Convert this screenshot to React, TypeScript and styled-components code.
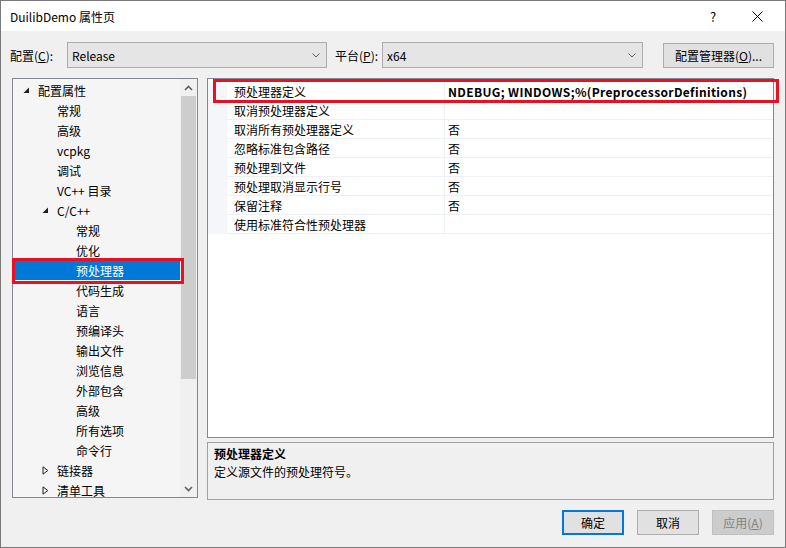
import React from 'react'
import styled, { createGlobalStyle } from 'styled-components'

const GlobalStyle = createGlobalStyle`
  html, body {
    margin: 0;
    padding: 0;
    background: #ffffff;
  }
  * {
    box-sizing: border-box;
  }
`

const FONT = `"Segoe UI", "Noto Sans CJK SC", sans-serif`

const Window = styled.div`
  position: relative;
  width: 786px;
  height: 548px;
  border: 1px solid #7a7a7a;
  background: #f0f0f0;
  font-family: ${FONT};
  font-size: 12px;
  color: #000;
  display: flex;
  flex-direction: column;
  overflow: hidden;
`

const TitleBar = styled.div`
  height: 30px;
  background: #ffffff;
  display: flex;
  align-items: center;
  padding-left: 9px;
  padding-right: 6px;
  flex-shrink: 0;

  .title {
    flex: 1;
    font-size: 12px;
  }
`

const TitleButton = styled.div`
  width: 44px;
  height: 30px;
  display: flex;
  align-items: center;
  justify-content: center;
  font-size: 13px;
`

const Body = styled.div`
  flex: 1;
  display: flex;
  flex-direction: column;
  padding: 11px 11px 0 11px;
`

const Toolbar = styled.div`
  height: 26px;
  display: flex;
  align-items: center;
  margin-left: -2px;
`

const Label = styled.span<{ $gap: number; $indent?: number }>`
  width: ${(p) => p.$gap}px;
  padding-left: ${(p) => p.$indent ?? 0}px;
  flex-shrink: 0;
  u {
    text-decoration: underline;
  }
`

const Combo = styled.div<{ $width: number }>`
  width: ${(p) => p.$width}px;
  height: 26px;
  border: 1px solid #adadad;
  background: #e5e5e5;
  display: flex;
  align-items: center;
  padding-left: 4px;
  padding-right: 6px;

  span {
    flex: 1;
  }
`

const PushButton = styled.div<{ $primary?: boolean; $disabled?: boolean }>`
  height: 25px;
  border: ${(p) => (p.$primary ? '2px' : '1px')} solid;
  background: ${(p) => (p.$disabled ? '#cccccc' : '#e1e1e1')};
  color: ${(p) => (p.$disabled ? '#838383' : '#000')};
  border-color: ${(p) => (p.$disabled ? '#bfbfbf' : p.$primary ? '#0078d7' : '#adadad')};
  display: flex;
  align-items: center;
  justify-content: center;
  width: 62px;
`

const ManagerButton = styled(PushButton)`
  width: 111px;
  margin-left: auto;
`

const Main = styled.div`
  display: flex;
  margin-top: 10px;
  height: 422px;
  gap: 9px;
`

const TreePanel = styled.div`
  width: 186px;
  height: 420px;
  border: 1px solid #828790;
  background: #f5f5f5;
  display: flex;
`

const TreeList = styled.div`
  flex: 1;
  padding-top: 1px;
  overflow: hidden;
`

const TreeRow = styled.div<{ $level: number; $selected?: boolean }>`
  height: 20px;
  display: flex;
  align-items: center;
  padding-left: ${(p) => 10 + p.$level * 19}px;
  background: ${(p) => (p.$selected ? '#0078d7' : 'transparent')};
  color: ${(p) => (p.$selected ? '#ffffff' : '#000')};
  white-space: nowrap;
`

const Toggle = styled.span`
  width: 15px;
  height: 20px;
  display: flex;
  align-items: center;
  flex-shrink: 0;
`

const ScrollBar = styled.div`
  width: 17px;
  background: #f0f0f0;
  display: flex;
  flex-direction: column;
  align-items: center;
`

const ScrollArrow = styled.div`
  height: 17px;
  width: 17px;
  display: flex;
  align-items: center;
  justify-content: center;
`

const ScrollTrack = styled.div`
  flex: 1;
  width: 100%;
  display: flex;
  flex-direction: column;
`

const ScrollThumb = styled.div`
  height: 283px;
  margin: 0 1px;
  background: #cdcdcd;
`

const RightColumn = styled.div`
  flex: 1;
  display: flex;
  flex-direction: column;
  gap: 4px;
`

const Grid = styled.div`
  height: 360px;
  border: 1px solid #828790;
  background: #ffffff;
  padding-top: 3px;
`

const GridRow = styled.div`
  display: flex;
  height: 19px;
`

const Gutter = styled.div`
  width: 19px;
  background: #f4f6fa;
  flex-shrink: 0;
`

const Cell = styled.div<{ $width?: number; $bold?: boolean }>`
  ${(p) => (p.$width ? `width: ${p.$width}px;` : 'flex: 1;')}
  border-bottom: 1px solid #edf0f6;
  border-right: ${(p) => (p.$width ? '1px solid #edf0f6' : 'none')};
  display: flex;
  align-items: center;
  padding-left: ${(p) => (p.$width ? 7 : 3)}px;
  font-weight: ${(p) => (p.$bold ? 700 : 400)};
  letter-spacing: ${(p) => (p.$bold ? '0.35px' : 'normal')};
  white-space: nowrap;
`

const Description = styled.div`
  height: 58px;
  border: 1px solid #a0a0a0;
  background: #f0f0f0;
  padding: 2px 6px;

  .head {
    font-weight: 700;
    line-height: 18px;
  }
  .text {
    line-height: 18px;
  }
`

const Footer = styled.div`
  display: flex;
  justify-content: flex-end;
  gap: 13px;
  margin-top: 10px;
`

const Highlight = styled.div<{ $x: number; $y: number; $w: number; $h: number }>`
  position: absolute;
  left: ${(p) => p.$x}px;
  top: ${(p) => p.$y}px;
  width: ${(p) => p.$w}px;
  height: ${(p) => p.$h}px;
  border: 3px solid #e81123;
  pointer-events: none;
`

type TreeItem = {
  label: string
  level: number
  state?: 'open' | 'closed'
  selected?: boolean
}

const treeItems: TreeItem[] = [
  { label: '配置属性', level: 0, state: 'open' },
  { label: '常规', level: 1 },
  { label: '高级', level: 1 },
  { label: 'vcpkg', level: 1 },
  { label: '调试', level: 1 },
  { label: 'VC++ 目录', level: 1 },
  { label: 'C/C++', level: 1, state: 'open' },
  { label: '常规', level: 2 },
  { label: '优化', level: 2 },
  { label: '预处理器', level: 2, selected: true },
  { label: '代码生成', level: 2 },
  { label: '语言', level: 2 },
  { label: '预编译头', level: 2 },
  { label: '输出文件', level: 2 },
  { label: '浏览信息', level: 2 },
  { label: '外部包含', level: 2 },
  { label: '高级', level: 2 },
  { label: '所有选项', level: 2 },
  { label: '命令行', level: 2 },
  { label: '链接器', level: 1, state: 'closed' },
  { label: '清单工具', level: 1, state: 'closed' },
]

const properties: { name: string; value: string; bold?: boolean }[] = [
  { name: '预处理器定义', value: 'NDEBUG; WINDOWS;%(PreprocessorDefinitions)', bold: true },
  { name: '取消预处理器定义', value: '' },
  { name: '取消所有预处理器定义', value: '否' },
  { name: '忽略标准包含路径', value: '否' },
  { name: '预处理到文件', value: '否' },
  { name: '预处理取消显示行号', value: '否' },
  { name: '保留注释', value: '否' },
  { name: '使用标准符合性预处理器', value: '' },
]

const Chevron = ({ up }: { up?: boolean }) => (
  <svg width="9" height="6" viewBox="0 0 9 6">
    <path
      d={up ? 'M1 5 L4.5 1.5 L8 5' : 'M1 1 L4.5 4.5 L8 1'}
      stroke="#606060"
      strokeWidth="1.6"
      fill="none"
    />
  </svg>
)

const ComboArrow = () => (
  <svg width="8" height="5" viewBox="0 0 8 5">
    <path d="M0.5 0.5 L4 4 L7.5 0.5" stroke="#606060" strokeWidth="1" fill="none" />
  </svg>
)

const ToggleIcon = ({ state, selected }: { state?: 'open' | 'closed'; selected?: boolean }) => {
  if (!state) return null
  const color = selected ? '#ffffff' : '#1e1e1e'
  if (state === 'open') {
    return (
      <svg width="7" height="7" viewBox="0 0 7 7">
        <path d="M6 0.5 L6 6 L0.5 6 Z" fill={color} />
      </svg>
    )
  }
  return (
    <svg width="7" height="9" viewBox="0 0 7 9">
      <path d="M1 0.8 L5.8 4.5 L1 8.2 Z" stroke={color} strokeWidth="1" fill="none" />
    </svg>
  )
}

const App = () => {
  return (
    <>
      <GlobalStyle />
      <Window>
        <TitleBar>
          <span className="title">DuilibDemo 属性页</span>
          <TitleButton>?</TitleButton>
          <TitleButton>
            <svg width="11" height="11" viewBox="0 0 11 11">
              <path d="M0.5 0.5 L10.5 10.5 M10.5 0.5 L0.5 10.5" stroke="#000" strokeWidth="1" />
            </svg>
          </TitleButton>
        </TitleBar>
        <Body>
          <Toolbar>
            <Label $gap={57}>
              配置(<u>C</u>):
            </Label>
            <Combo $width={260}>
              <span>Release</span>
              <ComboArrow />
            </Combo>
            <Label $gap={55} $indent={8}>
              平台(<u>P</u>):
            </Label>
            <Combo $width={261}>
              <span>x64</span>
              <ComboArrow />
            </Combo>
            <ManagerButton>
              配置管理器(<u>O</u>)...
            </ManagerButton>
          </Toolbar>

          <Main>
            <TreePanel>
              <TreeList>
                {treeItems.map((item, idx) => (
                  <TreeRow key={idx} $level={item.level} $selected={item.selected}>
                    <Toggle>
                      <ToggleIcon state={item.state} selected={item.selected} />
                    </Toggle>
                    {item.label}
                  </TreeRow>
                ))}
              </TreeList>
              <ScrollBar>
                <ScrollArrow>
                  <Chevron up />
                </ScrollArrow>
                <ScrollTrack>
                  <ScrollThumb />
                </ScrollTrack>
                <ScrollArrow>
                  <Chevron />
                </ScrollArrow>
              </ScrollBar>
            </TreePanel>

            <RightColumn>
              <Grid>
                {properties.map((prop, idx) => (
                  <GridRow key={idx}>
                    <Gutter />
                    <Cell $width={218}>{prop.name}</Cell>
                    <Cell $bold={prop.bold}>{prop.value}</Cell>
                  </GridRow>
                ))}
              </Grid>
              <Description>
                <div className="head">预处理器定义</div>
                <div className="text">定义源文件的预处理符号。</div>
              </Description>
            </RightColumn>
          </Main>

          <Footer>
            <PushButton $primary>确定</PushButton>
            <PushButton>取消</PushButton>
            <PushButton $disabled>
              应用(<u>A</u>)
            </PushButton>
          </Footer>
        </Body>

        <Highlight $x={11} $y={257} $w={172} $h={26} />
        <Highlight $x={212} $y={78} $w={566} $h={24} />
      </Window>
    </>
  )
}

export default App
